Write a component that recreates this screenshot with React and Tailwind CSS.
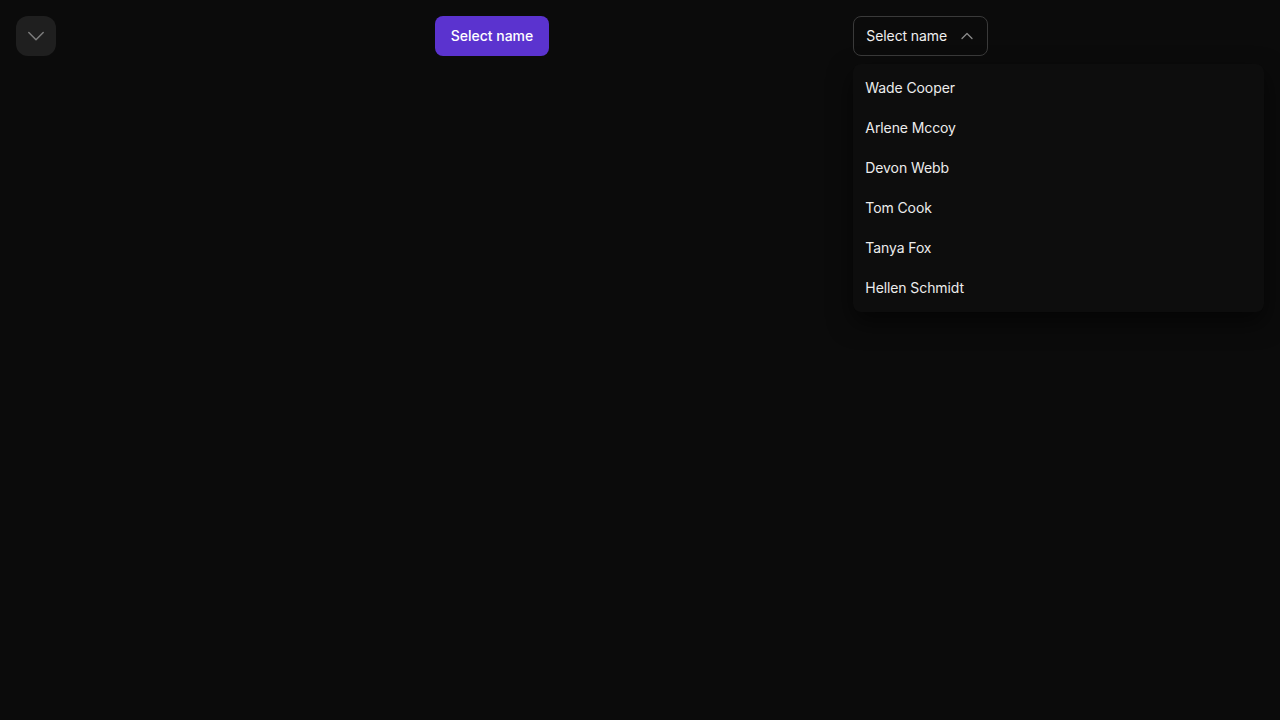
import React from "react";

const names = ["Wade Cooper", "Arlene Mccoy", "Devon Webb", "Tom Cook", "Tanya Fox", "Hellen Schmidt"];

export default function App() {
  return (
    <div className="min-h-screen w-full bg-[#0b0b0b] text-white" style={{ fontFamily: "Inter, 'Noto Sans', sans-serif" }}>
      <div className="grid grid-cols-3 gap-2 p-4 items-start">
        <div>
          <button className="flex h-10 w-10 items-center justify-center rounded-xl bg-[#1f1f1f]">
            <svg width="20" height="20" viewBox="0 0 20 20" fill="none" stroke="#7c7c7c" strokeWidth="1.5" strokeLinecap="round" strokeLinejoin="round">
              <path d="M2.8 6.5L10 13.7L17.2 6.5" />
            </svg>
          </button>
        </div>
        <div>
          <button className="h-10 rounded-lg bg-[#5b33cf] px-4 text-sm font-medium text-white">Select name</button>
        </div>
        <div className="relative">
          <button className="flex h-10 items-center gap-3 rounded-lg border border-[#3a3a3a] pl-3 pr-3 text-sm text-[#f0f0f0]">
            <span className="tracking-[-0.1px]">Select name</span>
            <svg width="16" height="16" viewBox="0 0 16 16" fill="none" stroke="#8a8a8a" strokeWidth="1.3" strokeLinecap="round" strokeLinejoin="round">
              <path d="M3 10.5L8 5.5L13 10.5" />
            </svg>
          </button>
          <div className="mt-2 w-full rounded-lg bg-[#0d0d0d] p-1 shadow-[0_10px_25px_rgba(0,0,0,0.6)]">
            {names.map((n) => (
              <div key={n} className="flex h-10 items-center px-2 text-sm tracking-[-0.1px] text-[#ececec]">{n}</div>
            ))}
          </div>
        </div>
      </div>
    </div>
  );
}
